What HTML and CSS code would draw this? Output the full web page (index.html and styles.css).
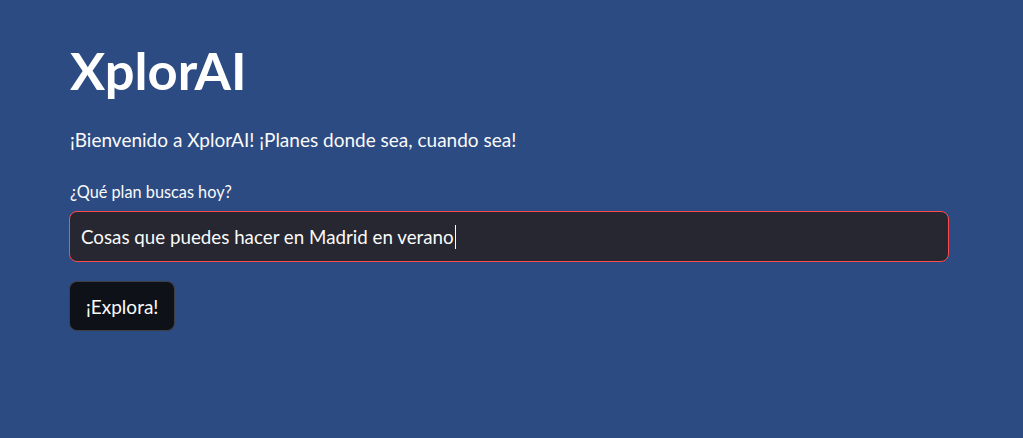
FILE: index.html
```html
<!DOCTYPE html>
<html lang="es">
<head>
<meta charset="utf-8">
<title>XplorAI</title>
<link rel="stylesheet" href="styles.css">
</head>
<body>
<main class="app">
  <h1 class="title">XplorAI</h1>
  <p class="intro">¡Bienvenido a XplorAI! ¡Planes donde sea, cuando sea!</p>
  <div class="field">
    <label class="label">¿Qué plan buscas hoy?</label>
    <div class="input"><span class="value">Cosas que puedes hacer en Madrid en verano</span><span class="caret"></span></div>
  </div>
  <button class="btn">¡Explora!</button>
</main>
</body>
</html>
```
FILE: styles.css
```css
html, body {
  margin: 0;
  padding: 0;
  background: #2c4b82;
  height: 100%;
}
body {
  font-family: "Lato", "Liberation Sans", sans-serif;
  color: #fafafa;
}
.app {
  padding: 38px 74px 0 69px;
  display: flex;
  flex-direction: column;
  align-items: flex-start;
}
.title {
  margin: 0 0 0 1px;
  font-size: 52.5px;
  font-weight: 700;
  line-height: 64px;
  color: #ffffff;
}
.intro {
  margin: 24px 0 0 1px;
  font-size: 19px;
  line-height: 28px;
}
.field {
  margin-top: 27px;
  align-self: stretch;
  display: flex;
  flex-direction: column;
  gap: 8px;
}
.label {
  margin-left: 1px;
  font-size: 16.3px;
  line-height: 22px;
}
.input {
  height: 51px;
  box-sizing: border-box;
  border: 1px solid #ff4b4b;
  border-radius: 8px;
  background: #262730;
  display: flex;
  align-items: center;
  padding: 0 11px;
  font-size: 18.75px;
}
.caret {
  display: inline-block;
  width: 1px;
  height: 24px;
  background: #fafafa;
  margin-left: 1px;
}
.btn {
  margin-top: 19px;
  height: 50px;
  padding: 0 16px;
  background: #0e1117;
  color: #fafafa;
  border: 1px solid rgba(250,250,250,0.2);
  border-radius: 8px;
  font-family: inherit;
  font-size: 19px;
}
```
